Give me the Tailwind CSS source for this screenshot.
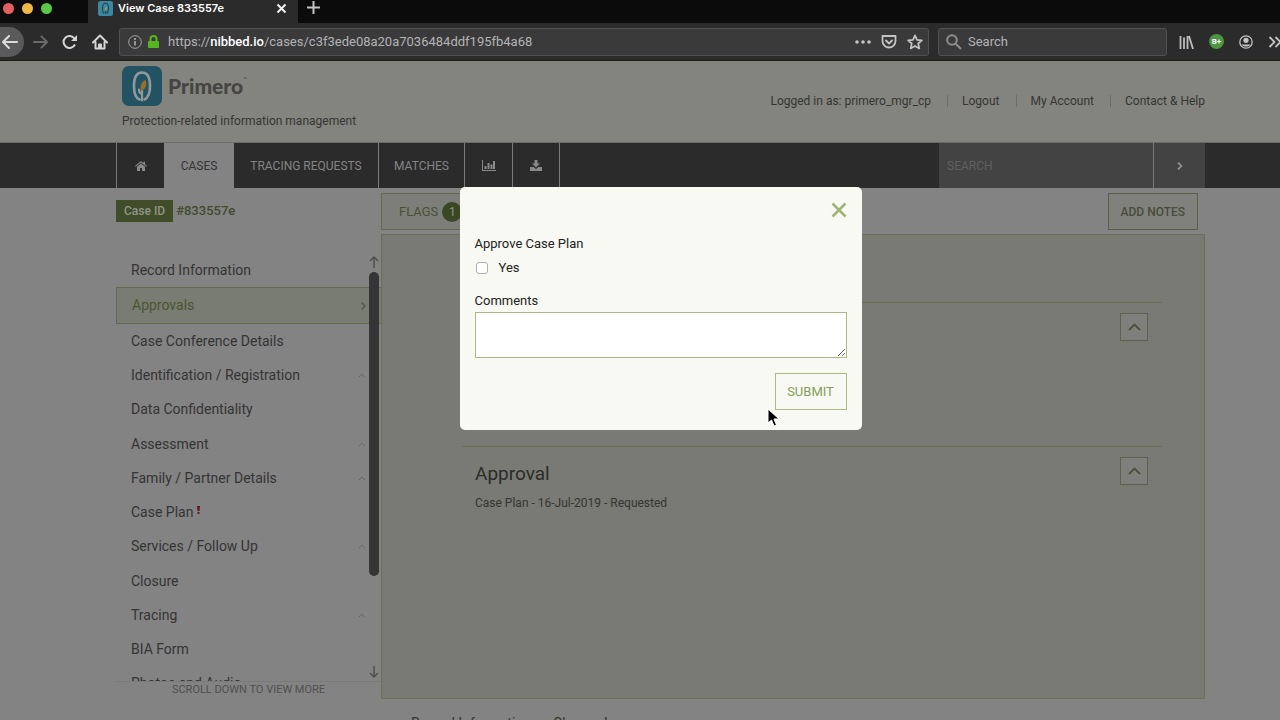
<!DOCTYPE html>
<html lang="en">
<head>
  <meta charset="UTF-8" />
  <title>View Case 833557e</title>
  <meta name="viewport" content="width=device-width, initial-scale=1.0" />
  <script src="https://cdn.jsdelivr.net/npm/@tailwindcss/browser@4"></script>
</head>

<body class="h-screen overflow-hidden bg-[#838383] font-[Roboto,sans-serif] text-[13px] text-[#353532]">
  <!-- Tab strip -->
  <div class="flex h-[23px] items-start bg-[#0b0b0b]">
    <div class="flex w-[88px] shrink-0 gap-[8px] pt-[3px] pl-[3px]">
      <span class="size-[11px] rounded-full bg-[#e4605e]"></span>
      <span class="size-[11px] rounded-full bg-[#f0b849]"></span>
      <span class="size-[11px] rounded-full bg-[#5cc847]"></span>
    </div>
    <div class="flex h-[23px] w-[210px] items-start bg-[#2b2b2b] pl-[10px] font-[Inter,sans-serif] text-[11px] leading-[17px] font-semibold text-white">
      <svg class="mr-[5px] mt-px size-[15px]" viewBox="0 0 40 40"><rect width="40" height="40" rx="6" fill="#3c88a3"/><path d="M16.500 33.500C13 31.500 12 27 12 19.500 12 10.500 14.500 6 20 6s8 4.500 8 13.500c0 7-1.500 12-5 14M20 34V25" fill="none" stroke="#24454f" stroke-width="3"/><path d="M19 25c-1-6 1-9 4-10 1 5 0 9-4 10z" fill="#c49a48"/></svg>
      <span class="flex-1">View Case 833557e</span>
      <button aria-label="Close tab" class="mt-[3px] mr-[11px]"><svg class="size-[11px]" viewBox="0 0 11 11" fill="none" stroke="#f0f0f0" stroke-width="2"><path d="M1.500 1.500l8 8M9.500 1.500l-8 8"/></svg></button>
    </div>
    <button aria-label="New tab" class="mt-[1px] ml-[9px]"><svg class="size-[13px]" viewBox="0 0 13 13" fill="none" stroke="#c4c4c4" stroke-width="2"><path d="M6.500 0v13M0 6.500h13"/></svg></button>
  </div>

  <!-- Toolbar -->
  <div class="flex h-[38px] items-center border-b border-[#1c1c1c] bg-[#2b2b2b] text-[13px] text-[#b4b4b6]">
    <button aria-label="Back" class="flex h-[30px] w-[24px] items-center rounded-r-full bg-[#5a5a5b] pl-[2px]"><svg class="h-[14px] w-[16px]" viewBox="0 0 16 14" fill="none" stroke="#dcdcdc" stroke-width="2" stroke-linecap="round" stroke-linejoin="round"><path d="M15 7H1M7 1L1 7l6 6"/></svg></button>
    <button aria-label="Forward" class="ml-[9px]"><svg class="h-[14px] w-[15px]" viewBox="0 0 16 14" fill="none" stroke="#6b6b6b" stroke-width="2" stroke-linecap="round" stroke-linejoin="round"><path d="M1 7h14M9 1l6 6-6 6"/></svg></button>
    <button aria-label="Reload" class="ml-[14px]"><svg class="size-[16px]" viewBox="0 0 16 16" fill="none" stroke="#d4d4d4" stroke-width="2"><path d="M13 10.500A6 6 0 1 1 12.500 4.500"/><path d="M15 1v6H9z" fill="#d4d4d4" stroke="none"/></svg></button>
    <button aria-label="Home" class="ml-[14px]"><svg class="size-[16px]" viewBox="0 0 16 16" fill="none" stroke="#d4d4d4" stroke-width="2" stroke-linecap="round" stroke-linejoin="round"><path d="M1 8.500L8 1.500l7 7M3.500 8v6.500h9V8"/><path d="M6.500 14v-4h3v4z" fill="#d4d4d4" stroke-width="1"/></svg></button>
    <div class="ml-[11px] flex h-[28px] flex-1 items-center rounded-[3px] border border-[#505051] bg-[#3a3a3b] pl-[8px]">
      <svg class="size-[14px]" viewBox="0 0 14 14" fill="none" stroke="#a4a4a4"><circle cx="7" cy="7" r="6.300"/><path d="M7 6v4.500M7 3v2" stroke-width="1.700"/></svg>
      <svg class="mx-[6px] h-[14px] w-[11px]" viewBox="0 0 11 14"><rect y="6" width="11" height="7" rx="1" fill="#54b71f"/><path d="M2.500 7V4a3 3 0 0 1 6 0v3" fill="none" stroke="#54b71f" stroke-width="2"/></svg>
      <div role="textbox" aria-label="Address" contenteditable="true" spellcheck="false" class="ml-[3px] flex-1">https://<span class="font-medium text-white">nibbed.io</span>/cases/c3f3ede08a20a7036484ddf195fb4a68</div>
      <button aria-label="Page actions"><svg class="h-[4px] w-[16px]" viewBox="0 0 16 4" fill="#c4c4c4"><circle cx="2" cy="2" r="1.800"/><circle cx="8" cy="2" r="1.800"/><circle cx="14" cy="2" r="1.800"/></svg></button>
      <button aria-label="Save to Pocket" class="ml-[10px]"><svg class="h-[14px] w-[16px]" viewBox="0 0 16 14" fill="none" stroke="#c4c4c4" stroke-width="1.800" stroke-linecap="round" stroke-linejoin="round"><path d="M1.500 1h13v5a6.500 6.500 0 0 1-13 0zM5 5.500l3 3 3-3"/></svg></button>
      <button aria-label="Bookmark" class="mr-[5px] ml-[10px]"><svg class="size-[16px]" viewBox="0 0 16 16" fill="none" stroke="#c4c4c4" stroke-width="1.700" stroke-linejoin="round"><path d="M8 1.300l2 4.500 4.900.5-3.700 3.200 1.100 4.900L8 11.900l-4.300 2.500 1.100-4.900L1.100 6.300 6 5.800z"/></svg></button>
    </div>
    <label class="ml-[9px] flex h-[28px] w-[229px] items-center rounded-[3px] border border-[#505051] bg-[#3a3a3b] pl-[7px]">
      <svg class="mr-[6px] size-[16px]" viewBox="0 0 16 16" fill="none" stroke="#8e8e8e" stroke-width="2"><circle cx="6" cy="6" r="4.800"/><path d="M9.500 9.500L15 15"/></svg>
      <input type="text" aria-label="Search the web" placeholder="Search" class="min-w-0 flex-1 outline-none placeholder:text-[#b4b4b6]" />
    </label>
    <div class="flex w-[113px] items-center gap-[15px] overflow-hidden pl-[12px]">
      <svg class="h-[14px] w-[15px] shrink-0" viewBox="0 0 15 14" stroke="#bdbdbd" stroke-width="1.800"><path d="M1.500 1v13M5 2.500V14M8.500 1v13M10 1l4 13"/></svg>
      <span class="flex size-[15px] shrink-0 items-center justify-center rounded-full bg-[#4b9440] text-[8px] font-bold text-white">B+</span>
      <svg class="size-[14px] shrink-0" viewBox="0 0 14 14" fill="none" stroke="#c4c4c4" stroke-width="1.300"><circle cx="7" cy="7" r="6.200"/><circle cx="7" cy="5.300" r="2.600" fill="#c4c4c4" stroke="none"/><path d="M2.700 9.500h8.600c-1 2.800-7.600 2.800-8.600 0z" fill="#c4c4c4" stroke="none"/></svg>
      <svg class="h-[12px] w-[14px] shrink-0" viewBox="0 0 14 12" fill="none" stroke="#c4c4c4" stroke-width="1.800"><path d="M1.500 1l5 5-5 5M7.500 1l5 5-5 5"/></svg>
    </div>
  </div>

  <!-- Site header -->
  <header class="flex h-[81px] items-start justify-between bg-[#83847e] pr-[75px] pl-[122px]">
    <div class="pt-[5px] text-[12px]">
      <div class="flex items-center gap-[6px]">
        <svg class="size-[40px]" viewBox="0 0 40 40"><rect width="40" height="40" rx="7" fill="#235363"/><path d="M17.500 33.500C13.500 32 12 27 12 20 12 11 14.500 6.500 20 6.500S28 11 28 20c0 7-1.500 11.500-5.500 13.500" fill="none" stroke="#8f9a9b" stroke-width="2.600" stroke-linecap="round"/><path d="M20 34.500V24M20 28c-2-.5-3-2-3-4.500" fill="none" stroke="#8f9a9b" stroke-width="2.200" stroke-linecap="round"/><path d="M19 25c-1.500-5.500.5-9 4.500-11 2 5 0 9.500-4.500 11z" fill="#956f28"/></svg>
        <div class="flex items-start font-[Lato,sans-serif] text-[21px] leading-[26px] font-black text-[#454543]">Primero<span class="text-[5px] leading-[12px] font-normal">™</span></div>
      </div>
      <p class="mt-[6px] leading-[18px]">Protection-related information management</p>
    </div>
    <nav class="flex pt-[31px] text-[12px] leading-[18px]">
      <span class="pr-[16px]">Logged in as: primero_mgr_cp</span>
      <a href="#" class="flex items-center pr-[16px] before:mr-[14px] before:h-[12px] before:border-l before:border-[#6d6d69]">Logout</a>
      <a href="#" class="flex items-center pr-[16px] before:mr-[14px] before:h-[12px] before:border-l before:border-[#6d6d69]">My Account</a>
      <a href="#" class="flex items-center before:mr-[14px] before:h-[12px] before:border-l before:border-[#6d6d69]">Contact &amp; Help</a>
    </nav>
  </header>

  <!-- Main navigation -->
  <nav class="flex h-[46px] border-t border-[#6b6b68] bg-[#2b2b2b] pr-[75px] pl-[116px] text-[12px] text-[#858585]">
    <a href="#" aria-label="Home" class="flex w-[48px] items-center justify-center border-l border-[#7b7b7b]"><svg class="h-[10px] w-[12px]" viewBox="0 0 12 10" fill="#8a8a8a"><path d="M6 0L0 5l.7.8L6 1.500l5.300 4.300.7-.8-2-1.700V.7H8.500v1.400zM2 5.700V10h3V7h2v3h3V5.700L6 2.500z"/></svg></a>
    <a href="#" class="flex w-[70px] items-center justify-center bg-[#838383] text-[#353535]">CASES</a>
    <a href="#" class="flex w-[144px] items-center justify-center">TRACING REQUESTS</a>
    <a href="#" class="flex w-[86px] items-center justify-center border-l border-[#7b7b7b]">MATCHES</a>
    <a href="#" aria-label="Reports" class="flex w-[48px] items-center justify-center border-l border-[#7b7b7b]"><svg class="h-[11px] w-[14px]" viewBox="0 0 14 11" fill="#8a8a8a"><path d="M0 0h1v10h13v1H0zM2.500 6h2v3h-2zM5.500 3h2v6h-2zM8.500 4.500h2v4.500h-2zM11 1h2v8h-2z"/></svg></a>
    <a href="#" aria-label="Exports" class="flex w-[48px] items-center justify-center border-x border-[#7b7b7b]"><svg class="h-[11px] w-[12px]" viewBox="0 0 12 11" fill="#8a8a8a"><path d="M4.500 0h3v3.500H10L6 7.500 2 3.500h2.500zM0 7h3.500L6 9l2.500-2H12v4H0z"/></svg></a>
    <form class="ml-auto flex bg-[#434343]">
      <input type="text" aria-label="Search cases" placeholder="SEARCH" class="w-[214px] pl-[8px] outline-none placeholder:text-[#606060]" />
      <button type="button" aria-label="Search" class="flex w-[52px] items-center justify-center border-l border-[#7b7b7b]"><svg class="h-[8px] w-[6px]" viewBox="0 0 6 8" fill="none" stroke="#8f8f8f" stroke-width="1.800"><path d="M1 .5L4.500 4 1 7.500"/></svg></button>
    </form>
  </nav>

  <main class="flex pr-[75px] pl-[116px]">
    <!-- Case forms -->
    <aside class="w-[265px] shrink-0">
      <div class="flex h-[65px] items-start gap-[3px] pt-[12px] leading-[22px]">
        <span class="bg-[#414d28] px-[8px] text-[12px] font-medium text-[#90938a]">Case ID</span>
        <span class="font-medium text-[#424b2e]">#833557e</span>
      </div>
      <div class="relative h-[429px] overflow-hidden border-b border-[#7a7a7a]">
        <ul class="flex h-[448px] flex-col text-[14px] text-[#343434] *:flex *:flex-1 *:items-center *:pr-[15px] *:pl-[15px]">
          <li><a href="#">Record Information</a></li>
          <li class="h-[37px] flex-none! justify-between border border-r-0 border-[#656b50] bg-[#797c72] text-[#4a5530]"><a href="#">Approvals</a><svg class="h-[8px] w-[5px]" viewBox="0 0 5 8" fill="none" stroke="#4d5345" stroke-width="1.200"><path d="M.7.700L4 4 .7 7.300"/></svg></li>
          <li><a href="#">Case Conference Details</a></li>
          <li class="justify-between"><a href="#">Identification / Registration</a><svg class="h-[5px] w-[8px]" viewBox="0 0 8 5" fill="none" stroke="#696969"><path d="M1 4l3-3 3 3"/></svg></li>
          <li><a href="#">Data Confidentiality</a></li>
          <li class="justify-between"><a href="#">Assessment</a><svg class="h-[5px] w-[8px]" viewBox="0 0 8 5" fill="none" stroke="#696969"><path d="M1 4l3-3 3 3"/></svg></li>
          <li class="justify-between"><a href="#">Family / Partner Details</a><svg class="h-[5px] w-[8px]" viewBox="0 0 8 5" fill="none" stroke="#696969"><path d="M1 4l3-3 3 3"/></svg></li>
          <li><a href="#">Case Plan</a><svg class="mb-[6px] ml-[4px] h-[8px] w-[3px]" viewBox="0 0 3 8" fill="#6a1526"><path d="M0 0h3l-.5 5h-2zM.5 6h2v2h-2z"/></svg></li>
          <li class="justify-between"><a href="#">Services / Follow Up</a><svg class="h-[5px] w-[8px]" viewBox="0 0 8 5" fill="none" stroke="#696969"><path d="M1 4l3-3 3 3"/></svg></li>
          <li><a href="#">Closure</a></li>
          <li class="justify-between"><a href="#">Tracing</a><svg class="h-[5px] w-[8px]" viewBox="0 0 8 5" fill="none" stroke="#696969"><path d="M1 4l3-3 3 3"/></svg></li>
          <li><a href="#">BIA Form</a></li>
          <li><a href="#">Photos and Audio</a></li>
        </ul>
        <!-- Scroll rail -->
        <div class="absolute inset-y-0 right-[2px] flex w-[10px] flex-col items-center py-[3px]">
          <svg class="h-[12px] w-[10px]" viewBox="0 0 10 12" fill="none" stroke="#505050" stroke-width="1.500"><path d="M5 12V1M1 5l4-4 4 4"/></svg>
          <span class="mt-[4px] mb-auto h-[304px] w-[10px] rounded-full bg-[#353535]"></span>
          <svg class="h-[12px] w-[10px]" viewBox="0 0 10 12" fill="none" stroke="#505050" stroke-width="1.500"><path d="M5 0v11M1 7l4 4 4-4"/></svg>
        </div>
      </div>
      <p class="text-center text-[11px] leading-[16px] text-[#505050]">SCROLL DOWN TO VIEW MORE</p>
    </aside>

    <!-- Form panel -->
    <section class="min-w-0 flex-1">
      <div class="flex h-[46px] items-start justify-between pt-[5px] pr-[7px]">
        <button class="flex h-[37px] items-center gap-[4px] border border-[#656b50] bg-[#7d7e7a] px-[17px] text-[13px] text-[#48512f]">FLAGS <span class="flex size-[20px] items-center justify-center rounded-full bg-[#3b4723] text-[12px] text-[#8f9288]">1</span></button>
        <button class="h-[37px] border border-[#5b6045] bg-[#80817c] px-[12px] text-[12px] font-medium text-[#484d3a]">ADD NOTES</button>
      </div>
      <div class="h-[465px] border border-[#6a6f58] bg-[#787a73] pt-[67px] pr-[42px] pl-[80px]">
        <div class="flex h-[144px] justify-end border-t border-[#6a6c58] pt-[10px] pr-[14px]">
          <button aria-label="Collapse section" class="flex size-[28px] items-center justify-center border border-[#5e624c] bg-[#7f807b]"><svg class="h-[8px] w-[13px]" viewBox="0 0 13 8" fill="none" stroke="#4b5038" stroke-width="1.800"><path d="M1 7l5.500-5.500L12 7"/></svg></button>
        </div>
        <div class="flex justify-between border-t border-[#6a6c58] pt-[10px] pr-[14px] pl-[13px]">
          <div>
            <h2 class="text-[19px] leading-[34px] text-[#2c2c2a]">Approval</h2>
            <p class="text-[12px] leading-[24px]">Case Plan - 16-Jul-2019 - Requested</p>
          </div>
          <button aria-label="Collapse Approval" class="flex size-[28px] items-center justify-center border border-[#5e624c] bg-[#7f807b]"><svg class="h-[8px] w-[13px]" viewBox="0 0 13 8" fill="none" stroke="#4b5038" stroke-width="1.800"><path d="M1 7l5.500-5.500L12 7"/></svg></button>
        </div>
      </div>
      <div class="flex gap-[22px] pt-[14px] pl-[30px] text-[14px] leading-[20px]">
        <a href="#">Record Information</a>
        <a href="#">Change Log</a>
      </div>
    </section>
  </main>

  <!-- Approval dialog -->
  <div class="absolute inset-0 flex items-start justify-center pt-[187px] pr-[75px] pl-[116px]">
    <form role="dialog" aria-label="Approve Case Plan" class="flex w-[402px] flex-col rounded-[5px] bg-[#f8f9f3] px-[15px] pt-[15px] pb-[20px] text-[13px] leading-[24px] text-[#222222]">
      <button type="button" aria-label="Close" class="self-end"><svg class="size-[16px]" viewBox="0 0 16 16" fill="none" stroke="#9fb575" stroke-width="2.500"><path d="M1.500 1.500l13 13M14.500 1.500l-13 13"/></svg></button>
      <span class="mt-[14px]">Approve Case Plan</span>
      <label class="flex items-center gap-[11px]"><input type="checkbox" class="ml-[1px] size-[12px] appearance-none rounded-[3px] border border-[#adadad] bg-white" />Yes</label>
      <label for="comments" class="mt-[10px] leading-[22px]">Comments</label>
      <textarea id="comments" class="h-[46px] resize border border-[#a9bb83] bg-white outline-none"></textarea>
      <button type="button" class="mt-[15px] h-[37px] w-[72px] self-end border border-[#a9bb83] text-[#869c5c]">SUBMIT</button>
    </form>
  </div>

  <!-- Pointer -->
  <svg class="absolute top-[408px] left-[767px] h-[19px] w-[13px]" viewBox="0 0 13 19"><path d="M1 1v14l3.500-3 2.500 6 2.500-1-2.500-6H12z" fill="#000" stroke="#fff"/></svg>
</body>
</html>
